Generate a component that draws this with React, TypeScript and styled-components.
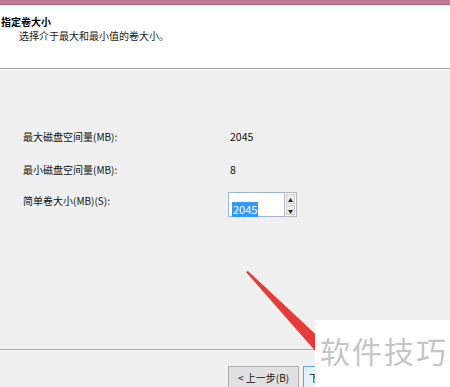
import React from "react";
import styled, { createGlobalStyle } from "styled-components";

const Global = createGlobalStyle`
  html, body { margin: 0; padding: 0; }
  body {
    width: 450px;
    height: 387px;
    overflow: hidden;
    background: #f0f0f0;
    font-family: "Noto Sans CJK SC", "Liberation Sans", sans-serif;
  }
`;

const Page = styled.div`
  position: relative;
  width: 450px;
  height: 387px;
  overflow: hidden;
  display: flex;
  flex-direction: column;
  background: #f0f0f0;
`;

const TitleBand = styled.div`
  height: 4px;
  background: #c07a98;
  border-bottom: 1px solid #a8647f;
`;

const Header = styled.header`
  height: 64px;
  box-sizing: border-box;
  background: #ffffff;
  padding: 10px 0 0 1px;
  border-bottom: 1px solid #a0a0a0;
  display: flex;
  flex-direction: column;
`;

const HeaderTitle = styled.div`
  font-size: 10px;
  line-height: 14px;
  font-weight: 700;
  color: #000;
`;

const HeaderSub = styled.div`
  font-size: 10px;
  line-height: 14px;
  color: #1a1a1a;
  padding-left: 18px;
`;

const HeaderEdge = styled.div`
  height: 1px;
  background: #ffffff;
`;

const Body = styled.main`
  flex: 1;
  display: grid;
  grid-template-columns: 205px 1fr;
  grid-template-rows: 33px 29px auto;
  align-content: start;
  padding: 60px 0 0 23px;
`;

const Label = styled.div<{ $top?: number }>`
  font-size: 10px;
  line-height: 14px;
  color: #111;
  margin-top: ${(p) => p.$top ?? 0}px;
`;

const Value = styled.div`
  font-size: 10.5px;
  line-height: 14px;
  color: #111;
  padding-left: 2px;
`;

const Spin = styled.div`
  display: flex;
  width: 69px;
  height: 25px;
`;

const SpinInput = styled.div`
  box-sizing: border-box;
  width: 56px;
  height: 25px;
  background: #fff;
  border: 1px solid #9fb7d6;
  border-right: none;
  padding: 2px 0 0 3px;
`;

const Selected = styled.span`
  display: inline-block;
  background: #3399ff;
  color: #fff;
  font-size: 11px;
  line-height: 15px;
  padding: 0 1px;
`;

const SpinButtons = styled.div`
  box-sizing: border-box;
  width: 13px;
  height: 25px;
  border: 1px solid #b8b8b8;
  background: #fff;
  display: flex;
  flex-direction: column;
  padding: 1px;
  gap: 1px;
`;

const SpinBtn = styled.div`
  flex: 1;
  background: #ececec;
  border: 1px solid #d0d0d0;
  display: flex;
  align-items: center;
  justify-content: center;
  font-size: 5px;
  line-height: 5px;
  color: #222;
`;

const FooterRule = styled.div`
  height: 1px;
  background: #a8a8a8;
  border-bottom: 1px solid #fafafa;
`;

const Footer = styled.footer`
  height: 36px;
  width: 315px;
  overflow: hidden;
  display: flex;
  gap: 4px;
  padding: 15px 0 0 228px;
  box-sizing: border-box;
`;

const Button = styled.div<{ $primary?: boolean }>`
  box-sizing: border-box;
  width: 71px;
  height: 23px;
  flex: none;
  border: 1px solid ${(p) => (p.$primary ? "#62a6e0" : "#adadad")};
  background: ${(p) => (p.$primary ? "#e5f1fb" : "#e1e1e1")};
  font-size: 10px;
  line-height: 21px;
  color: #111;
  padding-left: ${(p) => (p.$primary ? 5 : 9)}px;
`;

const Arrow = styled.svg`
  position: absolute;
  left: 0;
  top: 0;
  pointer-events: none;
`;

const Watermark = styled.div`
  position: absolute;
  left: 315px;
  top: 320px;
  width: 135px;
  height: 67px;
  background: #ffffff;
  box-sizing: border-box;
  padding: 10px 0 0 5px;
  font-size: 30px;
  line-height: 40px;
  letter-spacing: 2px;
  color: #c6c6c6;
  white-space: nowrap;
`;

export default function App() {
  return (
    <Page>
      <Global />
      <TitleBand />
      <Header>
        <HeaderTitle>指定卷大小</HeaderTitle>
        <HeaderSub>选择介于最大和最小值的卷大小。</HeaderSub>
      </Header>
      <HeaderEdge />
      <Body>
        <Label>最大磁盘空间量(MB):</Label>
        <Value>2045</Value>
        <Label>最小磁盘空间量(MB):</Label>
        <Value>8</Value>
        <Label $top={2}>简单卷大小(MB)(S):</Label>
        <Spin>
          <SpinInput>
            <Selected>2045</Selected>
          </SpinInput>
          <SpinButtons>
            <SpinBtn>▲</SpinBtn>
            <SpinBtn>▼</SpinBtn>
          </SpinButtons>
        </Spin>
      </Body>
      <FooterRule />
      <Footer>
        <Button>&lt; 上一步(B)</Button>
        <Button $primary>下</Button>
      </Footer>
      <Arrow width="450" height="387" viewBox="0 0 450 387">
        <polygon points="246,272 248,271 326,344 317,353" fill="#e63b3b" />
      </Arrow>
      <Watermark>软件技巧</Watermark>
    </Page>
  );
}
